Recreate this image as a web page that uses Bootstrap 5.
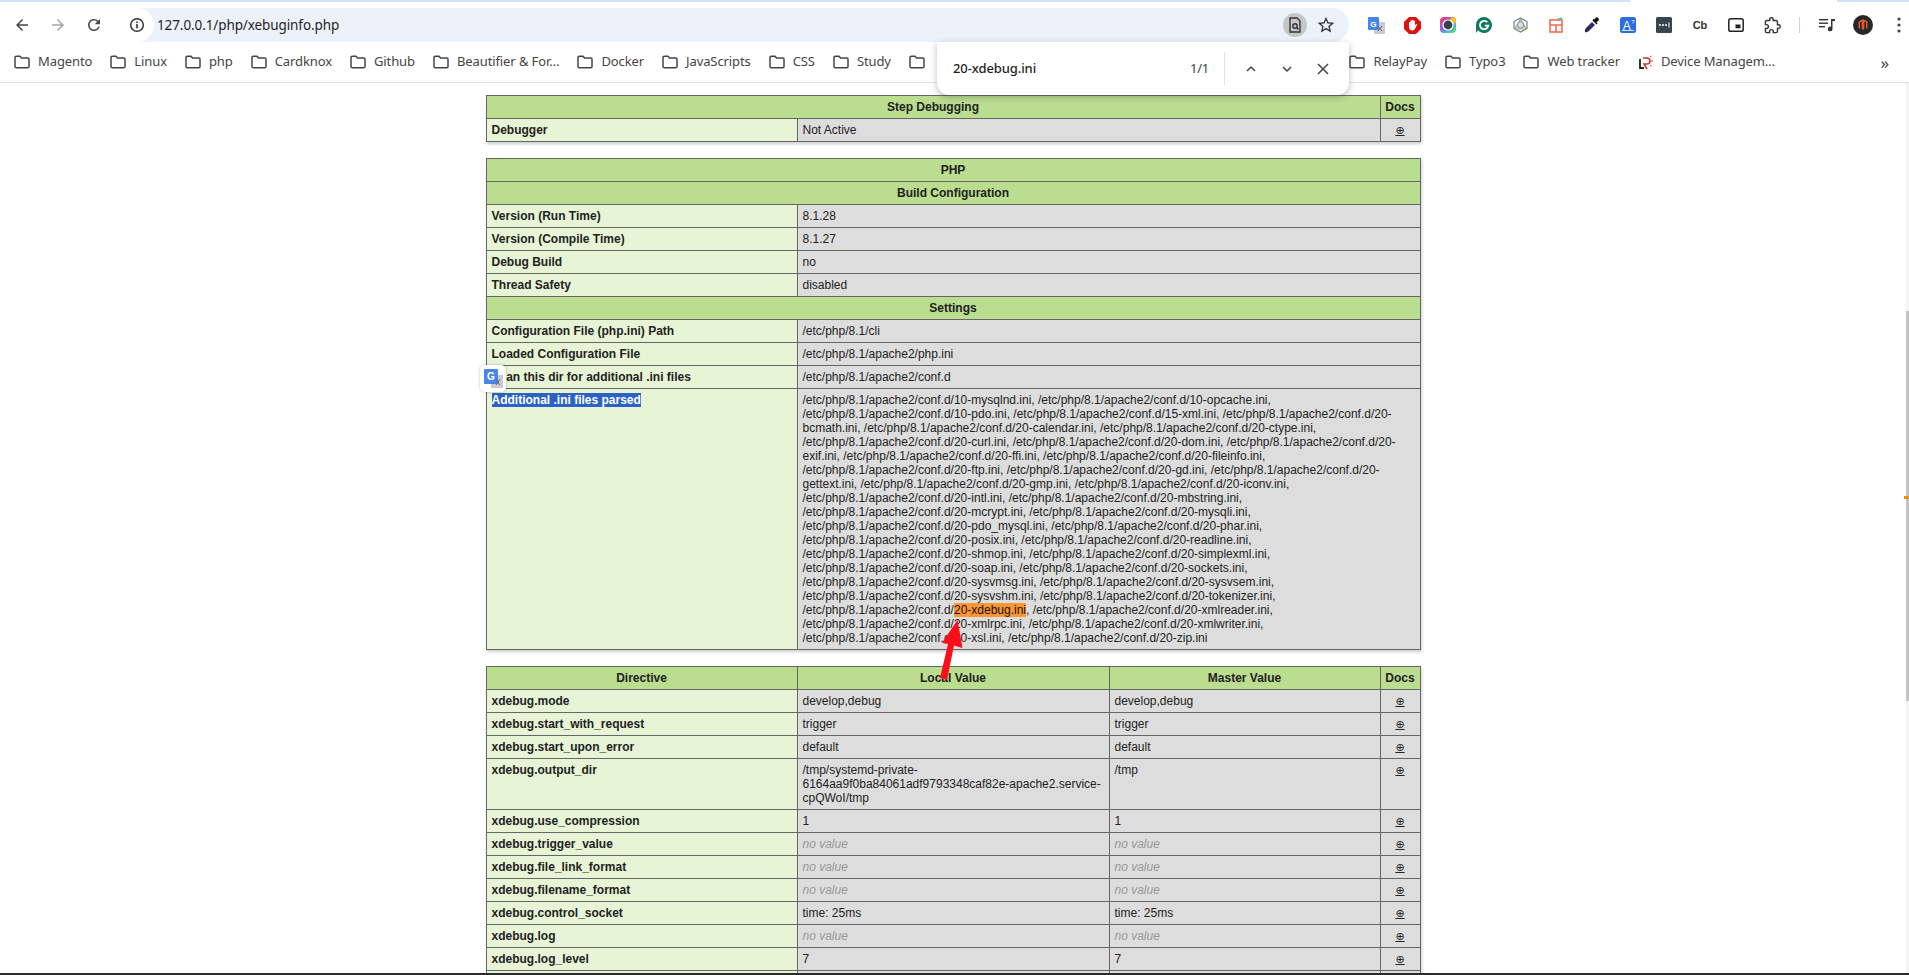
<!DOCTYPE html>
<html lang="en">
<head>
<meta charset="utf-8">
<title>phpinfo xdebug</title>
<link href="https://cdn.jsdelivr.net/npm/bootstrap@5.3.0/dist/css/bootstrap.min.css" rel="stylesheet">
<style>
html,body{height:100%;overflow:hidden;background:#fff}
.shot{height:975px;width:1909px;overflow:hidden;font-family:"Noto Sans",sans-serif;color:#222}
.tabstrip{height:2px;background:#d3e3fd;flex:none}
.tabstrip-active{width:207px;margin-left:1630px;height:2px;background:#fff}
.toolbar{height:40px;flex:none;background:#fff;padding-top:6px}
.navbtn{width:36px;height:36px;flex:none}
.nav-first{margin-left:4px}
.omni{width:1229px;height:34px;margin-left:8px;border-radius:17px;background:#edf2fa;flex:none}
.omni-info{width:34px;height:34px;border-radius:50%;background:#fff;flex:none}
.omni-url{font-size:13.5px;color:#1f1f1f;margin-left:3px;letter-spacing:-.1px}
.omni-end{margin-left:auto;padding-right:7px;gap:3px}
.findpill{width:24px;height:24px;border-radius:50%;background:#c4c7c5}
.starbtn{width:32px;height:32px}
.ext-row{margin-left:9px}
.extbtn{width:36px;height:36px;flex:none}
.ext-cb{font-family:"Liberation Sans",sans-serif;font-weight:700;font-size:11px;color:#333}
.ext-sep{width:1px;height:16px;background:#c7d3e6;margin:0 9px 0 9px;flex:none}
.bookmarks{height:41px;flex:none;background:#fff;border-bottom:1px solid #e0e0e0;padding-left:14px;gap:18px;font-size:13px;color:#444;letter-spacing:-.1px}
.bm{gap:8px;white-space:nowrap}
.bm-hidden{width:422.5px;flex:none}
.bm-more{margin-left:auto;margin-right:20px;font-size:17px;color:#444;line-height:1}
.pagearea{flex:1 1 0;min-height:0;overflow:hidden}
.pagescroll{flex:1 1 0;min-width:0;padding-top:12px;overflow:hidden}
.vtrack{width:3px;flex:none;background:#f5f5f5}
.vthumb{background:#c4c4c4;height:390px;margin-top:228px}
.vtick{top:413px;left:-2px;width:5px;height:3px;background:#e2920c}
.bottomstrip{height:2px;flex:none;background:#2b2b2b}
.pi-table.table{--bs-table-color:#222;--bs-table-bg:#fff;--bs-table-border-color:#666;width:934px;table-layout:fixed;border-collapse:collapse;box-shadow:1px 2px 3px rgba(0,0,0,.2);margin:0 auto 16px;font-family:"Liberation Sans",Arial,sans-serif;font-size:12px;line-height:14px}
.pi-table.table>:not(caption)>*>*{padding:4px 5px;border:1px solid #666;vertical-align:baseline;word-wrap:break-word;overflow-wrap:break-word}
.pi-table.table>:not(caption)>*{border-width:0}
.pi-table.table>:not(caption)>*>.cell-ini{padding-right:18px}
.pi-table.table>:not(caption)>*>.cell-docs{padding-left:2px;padding-right:2px;white-space:nowrap}
.row-cut td{height:23px}
.cell-h{--bs-table-bg:#bbdd8f;font-weight:700;text-align:center}
.cell-e{--bs-table-bg:#e7f4d6;font-weight:700}
.cell-v{--bs-table-bg:#ddd}
.cell-doc{--bs-table-bg:#ddd;text-align:center}
.doc-link{color:#222;text-decoration:underline;font-family:"DejaVu Sans",sans-serif;font-size:11px;line-height:0}
.noval{color:#999;font-style:italic}
.sel-text{background:#2c62c6;color:#fff}
.find-hit{background:#ff9632;color:#111}
.col-a{width:311px}
.col-b{width:312px}
.col-c{width:271px}
.col-d{width:40px}
.col-b1{width:583px}
.col-b2{width:623px}
.findbar{left:937px;top:42px;width:412px;height:53px;background:#fff;border-radius:0 0 12px 12px;box-shadow:0 2px 6px rgba(60,64,67,.35);z-index:5;padding-left:16px;font-size:13px;color:#1f1f1f}
.find-q{font-weight:500;width:237px;letter-spacing:-.1px}
.find-count{width:36px;color:#444;letter-spacing:-.2px}
.find-sep{width:1px;height:33px;background:#dbe3ee;margin-left:-2px;margin-right:8px}
.findbtn{width:36px;height:36px}
.xlate-pop{left:480px;top:365px;width:26px;height:27px;background:#fff;border-radius:5px;box-shadow:0 0 3px rgba(0,0,0,.25);z-index:4}
.arrow-ol{left:930px;top:610px;z-index:6}
</style>
</head>
<body>
<div class="shot d-flex flex-column position-relative">
  <div class="tabstrip"><div class="tabstrip-active"></div></div>
  <div class="toolbar d-flex align-items-center">
    <div class="navbtn nav-first d-flex align-items-center justify-content-center"><svg width="18" height="18" viewBox="0 0 24 24" fill="#474747"><path d="M20 11H7.83l5.59-5.59L12 4l-8 8 8 8 1.41-1.41L7.83 13H20v-2z"/></svg></div>
    <div class="navbtn d-flex align-items-center justify-content-center"><svg width="18" height="18" viewBox="0 0 24 24" fill="#a6a6a6"><path d="M4 11h12.17l-5.59-5.59L12 4l8 8-8 8-1.41-1.41L16.17 13H4v-2z"/></svg></div>
    <div class="navbtn d-flex align-items-center justify-content-center"><svg width="18" height="18" viewBox="0 0 24 24" fill="#474747"><path d="M17.65 6.35A7.958 7.958 0 0 0 12 4c-4.42 0-7.99 3.58-7.99 8s3.57 8 7.99 8c3.73 0 6.84-2.55 7.73-6h-2.08A5.99 5.99 0 0 1 12 18c-3.31 0-6-2.69-6-6s2.69-6 6-6c1.66 0 3.14.69 4.22 1.78L13 11h7V4l-2.35 2.35z"/></svg></div>
    <div class="omni d-flex align-items-center">
      <div class="omni-info d-flex align-items-center justify-content-center"><svg width="16" height="16" viewBox="0 0 16 16" fill="none"><circle cx="8" cy="8" r="6.3" stroke="#333" stroke-width="1.5"/><rect x="7.2" y="7" width="1.6" height="4.4" fill="#333"/><rect x="7.2" y="4.5" width="1.6" height="1.6" fill="#333"/></svg></div>
      <span class="omni-url">127.0.0.1/php/xebuginfo.php</span>
      <div class="omni-end d-flex align-items-center">
        <div class="findpill d-flex align-items-center justify-content-center"><svg width="16" height="18" viewBox="0 0 16 18" fill="none" stroke="#333" stroke-width="1.4"><path d="M3 2h7l3 3v11H3z"/><circle cx="8" cy="10" r="2.2"/><path d="M9.6 11.6l1.8 1.8"/></svg></div>
        <div class="starbtn d-flex align-items-center justify-content-center"><svg width="20" height="20" viewBox="0 0 24 24" fill="#333"><path d="M22 9.24l-7.19-.62L12 2 9.19 8.63 2 9.24l5.46 4.73L5.82 21 12 17.27 18.18 21l-1.63-7.03L22 9.24zM12 15.4l-3.76 2.27 1-4.28-3.32-2.88 4.38-.38L12 6.1l1.71 4.04 4.38.38-3.32 2.88 1 4.28L12 15.4z"/></svg></div>
      </div>
    </div>
    <div class="ext-row d-flex align-items-center">
      <div class="extbtn d-flex align-items-center justify-content-center"><svg width="17" height="17" viewBox="0 0 17 17"><rect x="6" y="5" width="11" height="12" fill="#c8ccd2"/><rect x="0" y="0" width="11" height="13" rx="1" fill="#4a86e8"/><text x="5.4" y="10" text-anchor="middle" font-family="Liberation Sans" font-weight="700" font-size="8" fill="#fff">G</text><path d="M10 9l4 5M14 9l-4 5" stroke="#666" stroke-width="1"/></svg></div>
      <div class="extbtn d-flex align-items-center justify-content-center"><svg width="17" height="17" viewBox="0 0 17 17"><path d="M5 0h7l5 5v7l-5 5H5l-5-5V5z" fill="#e0110f"/><path d="M5 9V5.5a.8.8 0 0 1 1.4 0V8 3.8a.8.8 0 0 1 1.5 0V8 3.2a.8.8 0 0 1 1.5 0V8 4a.8.8 0 0 1 1.5 0v4.4l1-1.2c.6-.6 1.5 0 1 .8l-2 4a2.6 2.6 0 0 1-2.2 1.4H8A3 3 0 0 1 5 11z" fill="#fff"/></svg></div>
      <div class="extbtn d-flex align-items-center justify-content-center"><svg width="16" height="16" viewBox="0 0 16 16"><defs><linearGradient id="rb" x1="0" y1="0" x2="1" y2="1"><stop offset="0" stop-color="#f0435a"/><stop offset=".35" stop-color="#b34fd3"/><stop offset=".65" stop-color="#3fb4e8"/><stop offset="1" stop-color="#6fdc4a"/></linearGradient></defs><rect width="16" height="16" rx="4" fill="url(#rb)"/><rect x="10" y="0" width="6" height="7" rx="3" fill="#f6c02e"/><circle cx="8" cy="8" r="5.6" fill="#fff"/><circle cx="8" cy="8" r="4.4" fill="#39424b"/></svg></div>
      <div class="extbtn d-flex align-items-center justify-content-center"><svg width="16" height="16" viewBox="0 0 16 16"><path d="M8 0a8 8 0 1 1-6 13.3L0 16V8a8 8 0 0 1 8-8z" fill="#0f7a5f"/><path d="M11.3 5.2A4.2 4.2 0 1 0 12.3 8.7H8.8" fill="none" stroke="#fff" stroke-width="1.8"/></svg></div>
      <div class="extbtn d-flex align-items-center justify-content-center"><svg width="15" height="16" viewBox="0 0 15 16" fill="none" stroke="#5f86a8" stroke-width="1.2"><path d="M7.5 1L14 4.5V11.5L7.5 15 1 11.5V4.5z"/><path d="M7.5 2L2 12h11z" stroke="#c09a45"/><circle cx="7.5" cy="8" r="3" fill="#d5e4ee" stroke="#7f9fb8"/></svg></div>
      <div class="extbtn d-flex align-items-center justify-content-center"><svg width="14" height="16" viewBox="0 0 14 16" fill="none" stroke="#f26b4e" stroke-width="1.6"><rect x="1" y="3" width="12" height="12"/><path d="M1 8h12M7 8v7"/><path d="M8 2.5l5-1.5" stroke="#4fc3a1"/></svg></div>
      <div class="extbtn d-flex align-items-center justify-content-center"><svg width="16" height="16" viewBox="0 0 16 16"><path d="M1 15c-.5-1.8 0-3 1.2-4.2L8 5l3 3-5.8 5.8C4 15 2.8 15.5 1 15z" fill="#2c2f63"/><path d="M8.5 3.5l4 4 1-1-1-1 1.7-1.8a1.9 1.9 0 0 0-2.7-2.7L10.700 2.5l-1-1z" fill="#111"/></svg></div>
      <div class="extbtn d-flex align-items-center justify-content-center"><svg width="16" height="16" viewBox="0 0 16 16"><rect width="16" height="16" rx="2.5" fill="#2a6de0"/><text x="6.8" y="12.5" text-anchor="middle" font-family="Liberation Sans" font-size="12" fill="#fff">A</text><text x="12.8" y="7" text-anchor="middle" font-family="Liberation Sans" font-size="6" fill="#fff">?</text><path d="M2 13.5h12" stroke="#fff" stroke-width=".8"/></svg></div>
      <div class="extbtn d-flex align-items-center justify-content-center"><svg width="16" height="16" viewBox="0 0 16 16"><rect width="16" height="16" rx="1.5" fill="#37474f"/><circle cx="4" cy="8" r="1" fill="#fff"/><circle cx="7" cy="8" r="1" fill="#fff"/><circle cx="10" cy="8" r="1" fill="#fff"/><path d="M13 5.5v5" stroke="#fff" stroke-width="1"/></svg></div>
      <div class="extbtn ext-cb d-flex align-items-center justify-content-center">Cb</div>
      <div class="extbtn d-flex align-items-center justify-content-center"><svg width="16" height="14" viewBox="0 0 16 14" fill="none"><rect x=".8" y=".8" width="14.4" height="12.4" rx="1.8" stroke="#222" stroke-width="1.5"/><rect x="7.5" y="6.5" width="5" height="3.8" fill="#222"/></svg></div>
      <div class="extbtn d-flex align-items-center justify-content-center"><svg width="17" height="17" viewBox="0 0 24 24" fill="none" stroke="#333" stroke-width="2"><path d="M20.5 11H19V7c0-1.1-.9-2-2-2h-4V3.5C13 2.12 11.88 1 10.5 1S8 2.12 8 3.5V5H4c-1.1 0-1.99.9-1.99 2v3.8H3.5c1.49 0 2.7 1.21 2.7 2.7s-1.21 2.7-2.7 2.7H2V20c0 1.1.9 2 2 2h3.8v-1.5c0-1.49 1.21-2.7 2.7-2.7 1.49 0 2.7 1.21 2.7 2.7V22H17c1.1 0 2-.9 2-2v-4h1.5c1.38 0 2.5-1.12 2.5-2.5S21.88 11 20.5 11z"/></svg></div>
      <div class="ext-sep"></div>
      <div class="navbtn d-flex align-items-center justify-content-center"><svg width="16" height="14" viewBox="0 0 16 14" fill="#333"><rect x="0" y="1" width="9" height="1.4"/><rect x="0" y="4.5" width="9" height="1.4"/><rect x="0" y="8" width="6" height="1.4"/><path d="M12 1h4v2h-2.5v8a2.3 2.3 0 1 1-1.5-2.2z"/></svg></div>
      <div class="navbtn d-flex align-items-center justify-content-center"><svg width="20" height="20" viewBox="0 0 20 20"><circle cx="10" cy="10" r="10" fill="#25272a"/><path d="M10 4l4.5 2.6v6.3l-1.5.9V7.5L11.3 6.6V14l-1.3.8-1.3-.8V6.6L7 7.5v6.3l-1.5-.9V6.6z" fill="#e2582a"/></svg></div>
      <div class="navbtn d-flex align-items-center justify-content-center"><svg width="4" height="16" viewBox="0 0 4 16" fill="#444"><circle cx="2" cy="2" r="1.6"/><circle cx="2" cy="8" r="1.6"/><circle cx="2" cy="14" r="1.6"/></svg></div>
    </div>
  </div>
  <div class="bookmarks d-flex align-items-center">
    <div class="bm d-flex align-items-center"><svg width="16" height="14" viewBox="0 0 16 14" fill="none" stroke="#444" stroke-width="1.5"><path d="M1 2.5A1.3 1.3 0 0 1 2.3 1.2H6l1.5 1.8h6.2A1.3 1.3 0 0 1 15 4.3v7.2a1.3 1.3 0 0 1-1.3 1.3H2.3A1.3 1.3 0 0 1 1 11.5z"/></svg>Magento</div>
    <div class="bm d-flex align-items-center"><svg width="16" height="14" viewBox="0 0 16 14" fill="none" stroke="#444" stroke-width="1.5"><path d="M1 2.5A1.3 1.3 0 0 1 2.3 1.2H6l1.5 1.8h6.2A1.3 1.3 0 0 1 15 4.3v7.2a1.3 1.3 0 0 1-1.3 1.3H2.3A1.3 1.3 0 0 1 1 11.5z"/></svg>Linux</div>
    <div class="bm d-flex align-items-center"><svg width="16" height="14" viewBox="0 0 16 14" fill="none" stroke="#444" stroke-width="1.5"><path d="M1 2.5A1.3 1.3 0 0 1 2.3 1.2H6l1.5 1.8h6.2A1.3 1.3 0 0 1 15 4.3v7.2a1.3 1.3 0 0 1-1.3 1.3H2.3A1.3 1.3 0 0 1 1 11.5z"/></svg>php</div>
    <div class="bm d-flex align-items-center"><svg width="16" height="14" viewBox="0 0 16 14" fill="none" stroke="#444" stroke-width="1.5"><path d="M1 2.5A1.3 1.3 0 0 1 2.3 1.2H6l1.5 1.8h6.2A1.3 1.3 0 0 1 15 4.3v7.2a1.3 1.3 0 0 1-1.3 1.3H2.3A1.3 1.3 0 0 1 1 11.5z"/></svg>Cardknox</div>
    <div class="bm d-flex align-items-center"><svg width="16" height="14" viewBox="0 0 16 14" fill="none" stroke="#444" stroke-width="1.5"><path d="M1 2.5A1.3 1.3 0 0 1 2.3 1.2H6l1.5 1.8h6.2A1.3 1.3 0 0 1 15 4.3v7.2a1.3 1.3 0 0 1-1.3 1.3H2.3A1.3 1.3 0 0 1 1 11.5z"/></svg>Github</div>
    <div class="bm d-flex align-items-center"><svg width="16" height="14" viewBox="0 0 16 14" fill="none" stroke="#444" stroke-width="1.5"><path d="M1 2.5A1.3 1.3 0 0 1 2.3 1.2H6l1.5 1.8h6.2A1.3 1.3 0 0 1 15 4.3v7.2a1.3 1.3 0 0 1-1.3 1.3H2.3A1.3 1.3 0 0 1 1 11.5z"/></svg>Beautifier &amp; For…</div>
    <div class="bm d-flex align-items-center"><svg width="16" height="14" viewBox="0 0 16 14" fill="none" stroke="#444" stroke-width="1.5"><path d="M1 2.5A1.3 1.3 0 0 1 2.3 1.2H6l1.5 1.8h6.2A1.3 1.3 0 0 1 15 4.3v7.2a1.3 1.3 0 0 1-1.3 1.3H2.3A1.3 1.3 0 0 1 1 11.5z"/></svg>Docker</div>
    <div class="bm d-flex align-items-center"><svg width="16" height="14" viewBox="0 0 16 14" fill="none" stroke="#444" stroke-width="1.5"><path d="M1 2.5A1.3 1.3 0 0 1 2.3 1.2H6l1.5 1.8h6.2A1.3 1.3 0 0 1 15 4.3v7.2a1.3 1.3 0 0 1-1.3 1.3H2.3A1.3 1.3 0 0 1 1 11.5z"/></svg>JavaScripts</div>
    <div class="bm d-flex align-items-center"><svg width="16" height="14" viewBox="0 0 16 14" fill="none" stroke="#444" stroke-width="1.5"><path d="M1 2.5A1.3 1.3 0 0 1 2.3 1.2H6l1.5 1.8h6.2A1.3 1.3 0 0 1 15 4.3v7.2a1.3 1.3 0 0 1-1.3 1.3H2.3A1.3 1.3 0 0 1 1 11.5z"/></svg>CSS</div>
    <div class="bm d-flex align-items-center"><svg width="16" height="14" viewBox="0 0 16 14" fill="none" stroke="#444" stroke-width="1.5"><path d="M1 2.5A1.3 1.3 0 0 1 2.3 1.2H6l1.5 1.8h6.2A1.3 1.3 0 0 1 15 4.3v7.2a1.3 1.3 0 0 1-1.3 1.3H2.3A1.3 1.3 0 0 1 1 11.5z"/></svg>Study</div>
    <div class="bm bm-hidden d-flex align-items-center"><svg width="16" height="14" viewBox="0 0 16 14" fill="none" stroke="#444" stroke-width="1.5"><path d="M1 2.5A1.3 1.3 0 0 1 2.3 1.2H6l1.5 1.8h6.2A1.3 1.3 0 0 1 15 4.3v7.2a1.3 1.3 0 0 1-1.3 1.3H2.3A1.3 1.3 0 0 1 1 11.5z"/></svg></div>
    <div class="bm d-flex align-items-center"><svg width="16" height="14" viewBox="0 0 16 14" fill="none" stroke="#444" stroke-width="1.5"><path d="M1 2.5A1.3 1.3 0 0 1 2.3 1.2H6l1.5 1.8h6.2A1.3 1.3 0 0 1 15 4.3v7.2a1.3 1.3 0 0 1-1.3 1.3H2.3A1.3 1.3 0 0 1 1 11.5z"/></svg>RelayPay</div>
    <div class="bm d-flex align-items-center"><svg width="16" height="14" viewBox="0 0 16 14" fill="none" stroke="#444" stroke-width="1.5"><path d="M1 2.5A1.3 1.3 0 0 1 2.3 1.2H6l1.5 1.8h6.2A1.3 1.3 0 0 1 15 4.3v7.2a1.3 1.3 0 0 1-1.3 1.3H2.3A1.3 1.3 0 0 1 1 11.5z"/></svg>Typo3</div>
    <div class="bm d-flex align-items-center"><svg width="16" height="14" viewBox="0 0 16 14" fill="none" stroke="#444" stroke-width="1.5"><path d="M1 2.5A1.3 1.3 0 0 1 2.3 1.2H6l1.5 1.8h6.2A1.3 1.3 0 0 1 15 4.3v7.2a1.3 1.3 0 0 1-1.3 1.3H2.3A1.3 1.3 0 0 1 1 11.5z"/></svg>Web tracker</div>
    <div class="bm d-flex align-items-center"><svg width="15" height="15" viewBox="0 0 15 15" fill="none"><path d="M2 4v9h4" stroke="#222" stroke-width="1.8"/><path d="M5 3h4a3 3 0 0 1 0 6H6l3 5" stroke="#c0392b" stroke-width="1.5"/><path d="M12 2l1.5-1M13 6h2M12 10l1.5 1" stroke="#c0392b" stroke-width="1"/></svg>Device Managem…</div>
    <div class="bm-more">»</div>
  </div>
  <div class="pagearea d-flex">
    <div class="pagescroll">
      <table class="table pi-table">
        <colgroup><col class="col-a"><col class="col-b1"><col class="col-d"></colgroup>
        <tbody>
          <tr><th colspan="2" class="cell-h">Step Debugging</th><th class="cell-h cell-docs">Docs</th></tr>
          <tr><td class="cell-e">Debugger</td><td class="cell-v">Not Active</td><td class="cell-doc"><a class="doc-link" href="#">⊕</a></td></tr>
        </tbody>
      </table>
      <table class="table pi-table">
        <colgroup><col class="col-a"><col class="col-b2"></colgroup>
        <tbody>
          <tr><th colspan="2" class="cell-h">PHP</th></tr>
          <tr><th colspan="2" class="cell-h">Build Configuration</th></tr>
          <tr><td class="cell-e">Version (Run Time)</td><td class="cell-v">8.1.28</td></tr>
          <tr><td class="cell-e">Version (Compile Time)</td><td class="cell-v">8.1.27</td></tr>
          <tr><td class="cell-e">Debug Build</td><td class="cell-v">no</td></tr>
          <tr><td class="cell-e">Thread Safety</td><td class="cell-v">disabled</td></tr>
          <tr><th colspan="2" class="cell-h">Settings</th></tr>
          <tr><td class="cell-e">Configuration File (php.ini) Path</td><td class="cell-v">/etc/php/8.1/cli</td></tr>
          <tr><td class="cell-e">Loaded Configuration File</td><td class="cell-v">/etc/php/8.1/apache2/php.ini</td></tr>
          <tr><td class="cell-e">Scan this dir for additional .ini files</td><td class="cell-v">/etc/php/8.1/apache2/conf.d</td></tr>
          <tr><td class="cell-e"><span class="sel-text">Additional .ini files parsed</span></td><td class="cell-v cell-ini">/etc/php/8.1/apache2/conf.d/10-mysqlnd.ini, /etc/php/8.1/apache2/conf.d/10-opcache.ini, /etc/php/8.1/apache2/conf.d/10-pdo.ini, /etc/php/8.1/apache2/conf.d/15-xml.ini, /etc/php/8.1/apache2/conf.d/20-bcmath.ini, /etc/php/8.1/apache2/conf.d/20-calendar.ini, /etc/php/8.1/apache2/conf.d/20-ctype.ini, /etc/php/8.1/apache2/conf.d/20-curl.ini, /etc/php/8.1/apache2/conf.d/20-dom.ini, /etc/php/8.1/apache2/conf.d/20-exif.ini, /etc/php/8.1/apache2/conf.d/20-ffi.ini, /etc/php/8.1/apache2/conf.d/20-fileinfo.ini, /etc/php/8.1/apache2/conf.d/20-ftp.ini, /etc/php/8.1/apache2/conf.d/20-gd.ini, /etc/php/8.1/apache2/conf.d/20-gettext.ini, /etc/php/8.1/apache2/conf.d/20-gmp.ini, /etc/php/8.1/apache2/conf.d/20-iconv.ini, /etc/php/8.1/apache2/conf.d/20-intl.ini, /etc/php/8.1/apache2/conf.d/20-mbstring.ini, /etc/php/8.1/apache2/conf.d/20-mcrypt.ini, /etc/php/8.1/apache2/conf.d/20-mysqli.ini, /etc/php/8.1/apache2/conf.d/20-pdo_mysql.ini, /etc/php/8.1/apache2/conf.d/20-phar.ini, /etc/php/8.1/apache2/conf.d/20-posix.ini, /etc/php/8.1/apache2/conf.d/20-readline.ini, /etc/php/8.1/apache2/conf.d/20-shmop.ini, /etc/php/8.1/apache2/conf.d/20-simplexml.ini, /etc/php/8.1/apache2/conf.d/20-soap.ini, /etc/php/8.1/apache2/conf.d/20-sockets.ini, /etc/php/8.1/apache2/conf.d/20-sysvmsg.ini, /etc/php/8.1/apache2/conf.d/20-sysvsem.ini, /etc/php/8.1/apache2/conf.d/20-sysvshm.ini, /etc/php/8.1/apache2/conf.d/20-tokenizer.ini, /etc/php/8.1/apache2/conf.d/<span class="find-hit">20-xdebug.ini</span>, /etc/php/8.1/apache2/conf.d/20-xmlreader.ini, /etc/php/8.1/apache2/conf.d/20-xmlrpc.ini, /etc/php/8.1/apache2/conf.d/20-xmlwriter.ini, /etc/php/8.1/apache2/conf.d/20-xsl.ini, /etc/php/8.1/apache2/conf.d/20-zip.ini</td></tr>
        </tbody>
      </table>
      <table class="table pi-table">
        <colgroup><col class="col-a"><col class="col-b"><col class="col-c"><col class="col-d"></colgroup>
        <tbody>
          <tr><th class="cell-h">Directive</th><th class="cell-h">Local Value</th><th class="cell-h">Master Value</th><th class="cell-h cell-docs">Docs</th></tr>
          <tr><td class="cell-e">xdebug.mode</td><td class="cell-v">develop,debug</td><td class="cell-v">develop,debug</td><td class="cell-doc"><a class="doc-link" href="#">⊕</a></td></tr>
          <tr><td class="cell-e">xdebug.start_with_request</td><td class="cell-v">trigger</td><td class="cell-v">trigger</td><td class="cell-doc"><a class="doc-link" href="#">⊕</a></td></tr>
          <tr><td class="cell-e">xdebug.start_upon_error</td><td class="cell-v">default</td><td class="cell-v">default</td><td class="cell-doc"><a class="doc-link" href="#">⊕</a></td></tr>
          <tr><td class="cell-e">xdebug.output_dir</td><td class="cell-v">/tmp/systemd-private-6164aa9f0ba84061adf9793348caf82e-apache2.service-cpQWoI/tmp</td><td class="cell-v">/tmp</td><td class="cell-doc"><a class="doc-link" href="#">⊕</a></td></tr>
          <tr><td class="cell-e">xdebug.use_compression</td><td class="cell-v">1</td><td class="cell-v">1</td><td class="cell-doc"><a class="doc-link" href="#">⊕</a></td></tr>
          <tr><td class="cell-e">xdebug.trigger_value</td><td class="cell-v"><i class="noval">no value</i></td><td class="cell-v"><i class="noval">no value</i></td><td class="cell-doc"><a class="doc-link" href="#">⊕</a></td></tr>
          <tr><td class="cell-e">xdebug.file_link_format</td><td class="cell-v"><i class="noval">no value</i></td><td class="cell-v"><i class="noval">no value</i></td><td class="cell-doc"><a class="doc-link" href="#">⊕</a></td></tr>
          <tr><td class="cell-e">xdebug.filename_format</td><td class="cell-v"><i class="noval">no value</i></td><td class="cell-v"><i class="noval">no value</i></td><td class="cell-doc"><a class="doc-link" href="#">⊕</a></td></tr>
          <tr><td class="cell-e">xdebug.control_socket</td><td class="cell-v">time: 25ms</td><td class="cell-v">time: 25ms</td><td class="cell-doc"><a class="doc-link" href="#">⊕</a></td></tr>
          <tr><td class="cell-e">xdebug.log</td><td class="cell-v"><i class="noval">no value</i></td><td class="cell-v"><i class="noval">no value</i></td><td class="cell-doc"><a class="doc-link" href="#">⊕</a></td></tr>
          <tr><td class="cell-e">xdebug.log_level</td><td class="cell-v">7</td><td class="cell-v">7</td><td class="cell-doc"><a class="doc-link" href="#">⊕</a></td></tr>
          <tr class="row-cut"><td class="cell-e"></td><td class="cell-v"></td><td class="cell-v"></td><td class="cell-doc"></td></tr>
        </tbody>
      </table>
    </div>
    <div class="vtrack position-relative"><div class="vthumb"></div><div class="vtick position-absolute"></div></div>
  </div>
  <div class="bottomstrip"></div>

  <div class="findbar position-absolute d-flex align-items-center">
    <div class="find-q">20-xdebug.ini</div>
    <div class="find-count">1/1</div>
    <div class="find-sep"></div>
    <div class="findbtn d-flex align-items-center justify-content-center"><svg width="14" height="14" viewBox="0 0 14 14" fill="none" stroke="#444" stroke-width="1.5"><path d="M3 9l4-4 4 4"/></svg></div>
    <div class="findbtn d-flex align-items-center justify-content-center"><svg width="14" height="14" viewBox="0 0 14 14" fill="none" stroke="#444" stroke-width="1.5"><path d="M3 5l4 4 4-4"/></svg></div>
    <div class="findbtn d-flex align-items-center justify-content-center"><svg width="14" height="14" viewBox="0 0 14 14" fill="none" stroke="#444" stroke-width="1.5"><path d="M2 2l10 10M12 2L2 12"/></svg></div>
  </div>
  <div class="xlate-pop position-absolute d-flex align-items-center justify-content-center"><svg width="21" height="21" viewBox="0 0 21 21"><rect x="8" y="7" width="12" height="13" fill="#c8ccd2"/><rect x="1" y="1" width="14" height="15" rx="1" fill="#4a86e8"/><text x="8" y="12" text-anchor="middle" font-family="Liberation Sans" font-weight="700" font-size="10" fill="#fff">G</text><path d="M13 11l4 6M17 11l-4 6" stroke="#666" stroke-width="1"/></svg></div>
  <svg class="arrow-ol position-absolute" width="40" height="75" viewBox="930 610 40 75"><path d="M957.5 620 L962.5 648 L954 645.5 L947 680 L940 678 L948 644 L942 643 Z" fill="#fb0d1c"/></svg>
</div>
<script src="https://cdn.jsdelivr.net/npm/bootstrap@5.3.0/dist/js/bootstrap.bundle.min.js"></script>
</body>
</html>
